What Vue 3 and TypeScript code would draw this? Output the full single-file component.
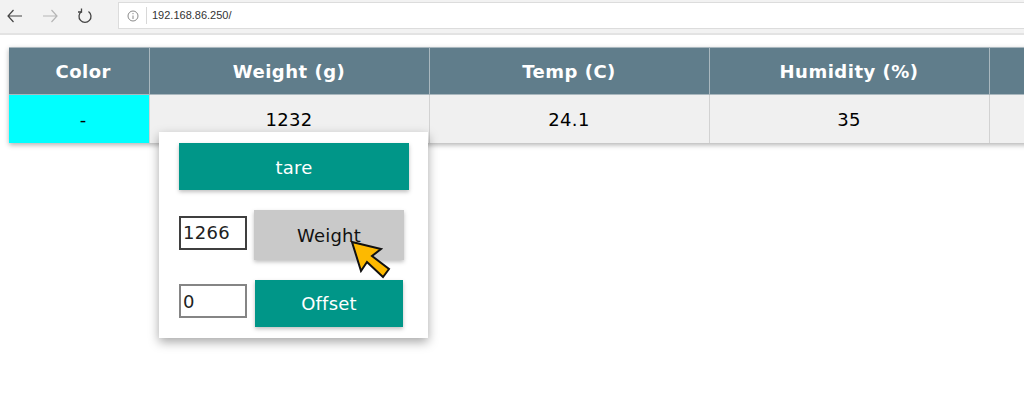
<script setup lang="ts">
import { ref } from "vue";

const columns = [
	{ title: "Color", value: "-", width: 140 },
	{ title: "Weight (g)", value: "1232", width: 280 },
	{ title: "Temp (C)", value: "24.1", width: 280 },
	{ title: "Humidity (%)", value: "35", width: 280 },
	{ title: "", value: "", width: 280 }
];

const weight = ref("1266");
const offset = ref("0");
</script>

<template>
	<div class="page">
		<div class="toolbar">
			<div class="nav">
				<svg width="18" height="18" viewBox="0 0 18 18" fill="none" stroke="#444" stroke-width="1.2">
					<path d="M16 9H2M7.500 3L2 9l5.500 6"/>
				</svg>
				<svg width="18" height="18" viewBox="0 0 18 18" fill="none" stroke="#b5b5b5" stroke-width="1.2">
					<path d="M2 9h14M10.500 3L16 9l-5.500 6"/>
				</svg>
				<svg width="18" height="18" viewBox="0 0 18 18" fill="none" stroke="#444" stroke-width="1.3">
					<path d="M5.500 4.500a6 6 0 1 0 7 0"/>
					<path d="M5.500 1.500V5H2"/>
				</svg>
			</div>
			<div class="address">
				<svg class="info" width="12" height="12" viewBox="0 0 12 12" fill="none" stroke="#8a8a8a">
					<circle cx="6" cy="6" r="5"/>
					<path d="M6 5.500V9M6 3v1.200"/>
				</svg>
				<span class="url">192.168.86.250/</span>
			</div>
		</div>

		<div class="content">
			<table class="sensors">
				<colgroup>
					<col v-for="c in columns" :key="c.title" :style="{ width: c.width + 'px' }">
				</colgroup>
				<thead>
					<tr>
						<th v-for="c in columns" :key="c.title">{{ c.title }}</th>
					</tr>
				</thead>
				<tbody>
					<tr>
						<td v-for="(c, i) in columns" :key="c.title" :class="{ color: i === 0 }">{{ c.value }}</td>
					</tr>
				</tbody>
			</table>

			<div class="popup">
				<button class="btn tare">tare</button>
				<div class="row first">
					<input v-model="weight" class="field active" type="text">
					<div class="hover-wrap">
						<button class="btn grey">Weight</button>
						<svg class="cursor" width="40" height="42" viewBox="0 0 40 42">
							<path d="M1 3L30 10L21 17L38 30L32 38L16 23L10 32Z" fill="#fdb900" stroke="#111" stroke-width="2" stroke-linejoin="miter"/>
						</svg>
					</div>
				</div>
				<div class="row second">
					<input v-model="offset" class="field" type="text">
					<button class="btn offset">Offset</button>
				</div>
			</div>
		</div>
	</div>
</template>

<style scoped>
.page {
	position: relative;
	width: 1024px;
	height: 404px;
	overflow: hidden;
	background: #fff;
	font-family: "DejaVu Sans", sans-serif;
}

.toolbar {
	display: flex;
	align-items: center;
	height: 35px;
	box-sizing: border-box;
	padding: 2px 0 4px 6px;
	background: #f2f2f2;
	border-bottom: 2px solid #e3e3e3;
}

.nav {
	display: flex;
	align-items: center;
	gap: 17px;
	width: 112px;
}

.address {
	display: flex;
	align-items: center;
	flex: 1;
	height: 27px;
	box-sizing: border-box;
	background: #fff;
	border: 1px solid #dcdcdc;
	border-right: none;
}

.info {
	margin-left: 8px;
}

.url {
	margin-left: 7px;
	padding-left: 5px;
	border-left: 1px solid #d8d8d8;
	font-family: "Liberation Sans", sans-serif;
	font-size: 11px;
	line-height: 17px;
	color: #333;
}

.content {
	position: relative;
	padding: 12px 0 0 9px;
}

.sensors {
	table-layout: fixed;
	width: 1260px;
	border-collapse: collapse;
	box-shadow: 0 2px 5px rgba(0, 0, 0, 0.3);
}

.sensors th {
	height: 46px;
	padding: 0;
	background: #607d8b;
	color: #fff;
	font-size: 18px;
	letter-spacing: 0.5px;
	font-weight: 700;
	border: 1px solid #a9b7be;
	border-right: none;
}

.sensors td {
	height: 48px;
	padding: 0;
	background: #f0f0f0;
	color: #000;
	font-size: 18px;
	letter-spacing: 0.3px;
	text-align: center;
	border-left: 1px solid #d2d2d2;
}

.sensors th:first-child,
.sensors td:first-child {
	border-left: none;
	padding-left: 9px;
}

.sensors td.color {
	background: #00ffff;
}

.popup {
	position: absolute;
	left: 159px;
	top: 97px;
	display: flex;
	flex-direction: column;
	width: 269px;
	height: 206px;
	box-sizing: border-box;
	padding: 11px 0 0 20px;
	background: #fff;
	box-shadow: 0 4px 10px rgba(0, 0, 0, 0.35);
}

.btn {
	padding: 0;
	border: none;
	font-family: inherit;
	font-size: 18px;
	letter-spacing: 0.2px;
	color: #fff;
	background: #009688;
	box-shadow: 0 2px 4px rgba(0, 0, 0, 0.25);
}

.tare {
	width: 230px;
	height: 47px;
	padding-top: 2px;
}

.row {
	display: flex;
	align-items: center;
}

.row.first {
	margin-top: 20px;
	gap: 7px;
}

.row.second {
	margin-top: 20px;
	gap: 8px;
}

.field {
	width: 68px;
	height: 34px;
	margin-bottom: 5px;
	box-sizing: border-box;
	padding: 0 2px;
	border: 2px solid #858585;
	outline: none;
	font-family: inherit;
	font-size: 18px;
	letter-spacing: 0.3px;
	color: #222;
}

.field.active {
	border-color: #3f3f3f;
}

.hover-wrap {
	position: relative;
}

.grey {
	display: block;
	width: 150px;
	height: 50px;
	background: #c9c9c9;
	color: #111;
}

.offset {
	width: 148px;
	height: 47px;
}

.cursor {
	position: absolute;
	left: 97px;
	top: 29px;
}
</style>

<style>
html,
body {
	margin: 0;
	overflow: hidden;
}
</style>
